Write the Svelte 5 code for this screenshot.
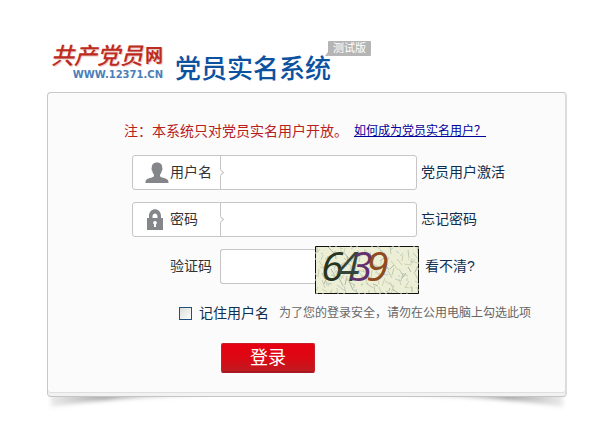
<script lang="ts">
  let username = $state("");
  let password = $state("");
  let code = $state("");
  let remember = $state(false);

  const digits = [
    { char: "6", x: 6, color: "#263420" },
    { char: "4", x: 22, color: "#33443a" },
    { char: "3", x: 35, color: "#63306e" },
    { char: "9", x: 51, color: "#8f4a20" },
  ];

  const inks = ["#bccbb0", "#cdd3b0", "#c2cec6", "#acbaa8", "#d0cdb0"];

  // Noise strokes spread over the captcha
  const scratches = Array.from({ length: 150 }, (_, i) => {
    const x = (i * 37 + ((i * i) % 11)) % 104;
    const y = (i * 23 + ((i * i) % 7)) % 48;
    const dx = ((i * 7) % 13) - 4;
    const dy = ((i * 5) % 9) + 1;
    return { x, y, x2: x + dx, y2: y + dy, color: inks[i % inks.length] };
  });
</script>

<main class="page">
  <header class="header">
    <a class="logo" href="#home">
      <span class="logo-name"><em>共产党员</em><b>网</b></span>
      <span class="logo-url">WWW.12371.CN</span>
    </a>
    <h1 class="title">
      党员实名系统
      <span class="badge">测试版</span>
    </h1>
  </header>

  <form class="panel" onsubmit={(e) => e.preventDefault()}>
    <p class="notice">
      <span>注：本系统只对党员实名用户开放。</span>
      <a href="#how">如何成为党员实名用户？</a>
    </p>

    <div class="row">
      <div class="field">
        <label for="username">
          <svg class="icon" viewBox="0 0 24 22" aria-hidden="true">
            <path
              d="M12 0.500c3.800 0 5.500 2.300 5.200 5.600c.6.5.3 2.200-.5 2.800c-.3 1.800-1 2.800-1.700 3.600v1.800c1 1.700 7.200 1.800 8.200 4.300l.4 2.400H.4l.4-2.400c1-2.500 7.200-2.600 8.200-4.300v-1.800c-.7-.8-1.400-1.800-1.700-3.600c-.8-.6-1.100-2.300-.5-2.800c-.3-3.300 1.400-5.600 5.200-5.600z"
            />
          </svg>
          用户名
        </label>
        <input id="username" type="text" bind:value={username} />
      </div>
      <a class="side" href="#activate">党员用户激活</a>
    </div>

    <div class="row">
      <div class="field">
        <label for="password">
          <svg class="icon" viewBox="0 0 24 22" aria-hidden="true">
            <path
              fill-rule="evenodd"
              d="M2 9h2V7c0-9 12-9 12 0v2h2v12H2zM7.500 9h5V7.500c0-4-5-4-5 0zM10 12a1.800 1.800 0 0 0-1 3.300V18h2v-2.700a1.800 1.800 0 0 0-1-3.300z"
            />
          </svg>
          密码
        </label>
        <input id="password" type="password" bind:value={password} />
      </div>
      <a class="side" href="#forgot">忘记密码</a>
    </div>

    <div class="row code-row">
      <label class="code-label" for="code">验证码</label>
      <input class="code" id="code" type="text" bind:value={code} />
      <svg class="captcha" viewBox="0 0 104 48" role="img" aria-label="验证码">
        <rect width="104" height="48" fill="#ecefd6" />
        {#each scratches as s}
          <line x1={s.x} y1={s.y} x2={s.x2} y2={s.y2} stroke={s.color} />
        {/each}
        {#each digits as d}
          <text x={d.x} y="35" fill={d.color}>{d.char}</text>
        {/each}
        <rect class="frame" x="0.5" y="0.5" width="103" height="47" />
      </svg>
      <a class="side refresh" href="#refresh">看不清?</a>
    </div>

    <div class="remember">
      <input id="remember" type="checkbox" bind:checked={remember} />
      <label for="remember">记住用户名</label>
      <span class="hint">为了您的登录安全，请勿在公用电脑上勾选此项</span>
    </div>

    <button class="submit" type="submit">登录</button>
  </form>

  <div class="curls">
    <svg viewBox="0 0 160 18" aria-hidden="true">
      <defs>
        <linearGradient id="fade" x1="0" x2="1">
          <stop offset="0" stop-color="#999" stop-opacity="0.2" />
          <stop offset="0.35" stop-color="#888" stop-opacity="0.75" />
          <stop offset="1" stop-color="#aaa" stop-opacity="0.1" />
        </linearGradient>
        <filter id="soft" x="-10%" y="-80%" width="120%" height="260%">
          <feGaussianBlur stdDeviation="2" />
        </filter>
      </defs>
      <path d="M4 -4H160V-1Q70 -1 4 10z" fill="url(#fade)" filter="url(#soft)" />
    </svg>
    <svg class="flip" viewBox="0 0 160 18" aria-hidden="true">
      <path d="M4 -4H160V-1Q70 -1 4 10z" fill="url(#fade)" filter="url(#soft)" />
    </svg>
  </div>
</main>

<style>
  :global(body) {
    margin: 0;
    background: #fff;
    font-family: "Liberation Sans", "Noto Sans CJK SC", sans-serif;
    font-size: 14px;
    color: #333;
  }

  .page {
    padding: 36px 28px 0 47px;
  }

  .header {
    display: flex;
    align-items: flex-start;
    height: 56px;
  }

  .logo {
    display: flex;
    flex-direction: column;
    width: 112px;
    padding: 4px 12px 0 4px;
    text-decoration: none;
  }

  .logo-name {
    display: flex;
    align-items: center;
    justify-content: space-between;
    height: 28px;
    color: #bd2a22;
    text-shadow: 1px 1px 1px #e8c8c0;
  }

  .logo-name em {
    font-family: "Noto Sans CJK SC", sans-serif;
    font-size: 23px;
    font-weight: 500;
  }

  .logo-name b {
    font-size: 18px;
  }

  .logo-url {
    font-family: "DejaVu Sans", sans-serif;
    font-size: 10px;
    line-height: 14px;
    font-weight: 700;
    text-align: right;
    color: #4a7fb9;
  }

  .title {
    position: relative;
    margin: 13px 0 0;
    font-size: 26px;
    line-height: 40px;
    font-weight: 500;
    color: #0d529f;
    white-space: nowrap;
  }

  .badge {
    position: absolute;
    left: 153px;
    top: -8px;
    padding: 0 5px;
    border-radius: 1px;
    background: #b5b5b5;
    font-size: 11px;
    line-height: 15px;
    font-weight: 400;
    color: #fff;
  }

  .badge::before {
    content: "";
    position: absolute;
    left: -3px;
    bottom: 0;
    border-left: 3px solid transparent;
    border-bottom: 4px solid #c8b0a8;
  }

  .panel {
    display: flex;
    flex-direction: column;
    align-items: flex-start;
    position: relative;
    z-index: 1;
    padding: 26px 0 23px 84px;
    border: 1px solid #c8c8c8;
    border-right: 2px solid #dcdcdc;
    border-bottom: 1px solid #c4c4c4;
    border-radius: 4px;
    background: #fbfbfb;
    box-shadow: inset 0 -3px #f2f2f2, inset 0 -4px #dfdfdf;
  }

  .notice {
    display: flex;
    align-items: center;
    gap: 6px;
    margin: 0 0 12px -8px;
    line-height: 24px;
    color: #b8201c;
    white-space: nowrap;
  }

  .notice a {
    font-size: 12px;
    color: #00009c;
  }

  .row {
    display: flex;
    align-items: flex-start;
    margin-bottom: 12px;
    line-height: 35px;
    white-space: nowrap;
  }

  .field {
    display: flex;
    box-sizing: border-box;
    width: 285px;
    height: 35px;
    border: 1px solid #c6c6c6;
    border-radius: 3px;
    background: #fff;
    line-height: 33px;
  }

  .field label {
    display: flex;
    align-items: center;
    gap: 1px;
    position: relative;
    box-sizing: border-box;
    width: 88px;
    padding-left: 12px;
    border-right: 1px solid #c6c6c6;
  }

  .field label::after {
    content: "";
    position: absolute;
    right: -3px;
    top: 14px;
    width: 4px;
    height: 4px;
    border: solid #c6c6c6;
    border-width: 1px 1px 0 0;
    background: #fff;
    transform: rotate(45deg);
  }

  .icon {
    width: 24px;
    height: 22px;
    fill: #85868a;
  }

  .field input {
    flex: 1;
    min-width: 0;
    padding: 0 8px;
    border: 0;
    background: none;
    font: inherit;
    outline: none;
  }

  .side {
    margin-left: 4px;
    color: #0e2f50;
    text-decoration: none;
  }

  .code-row {
    height: 44px;
    margin-bottom: 8px;
  }

  .code-label {
    width: 50px;
    padding-left: 38px;
  }

  .code {
    box-sizing: border-box;
    width: 95px;
    height: 35px;
    padding: 0 8px;
    border: 1px solid #c6c6c6;
    border-right: 0;
    border-radius: 3px 0 0 3px;
    background: #fff;
    font: inherit;
    outline: none;
  }

  .captcha {
    width: 104px;
    height: 48px;
    margin-top: -3px;
    font-family: "Open Sans", sans-serif;
    font-size: 41px;
    font-style: italic;
  }

  .frame {
    fill: none;
    stroke: #111;
    stroke-dasharray: 14 1 5 1;
  }

  .refresh {
    margin-left: 6px;
  }

  .remember {
    display: flex;
    align-items: center;
    margin: 0 0 18px 47px;
    line-height: 24px;
    color: #0e2f50;
    white-space: nowrap;
  }

  .remember input {
    appearance: none;
    box-sizing: border-box;
    width: 13px;
    height: 13px;
    margin: 0 7px 0 0;
    border: 1px solid #1d5180;
    background: linear-gradient(135deg, #dcdcd7, #fff);
  }

  .remember input:checked {
    background: #1d5180;
  }

  .hint {
    margin-left: 10px;
    font-size: 12px;
    color: #666;
  }

  .submit {
    width: 94px;
    height: 30px;
    margin-left: 89px;
    padding: 0;
    border: 1px solid #c8202a;
    border-bottom: 2px solid #a81820;
    border-radius: 2px;
    background: linear-gradient(#e60012, #dc0814 50%, #c01a20);
    font: inherit;
    font-size: 18px;
    line-height: 26px;
    color: #fff;
    cursor: pointer;
  }

  .curls {
    display: flex;
    justify-content: space-between;
  }

  .curls svg {
    width: 160px;
    height: 18px;
  }

  .flip {
    transform: scaleX(-1);
  }
</style>
